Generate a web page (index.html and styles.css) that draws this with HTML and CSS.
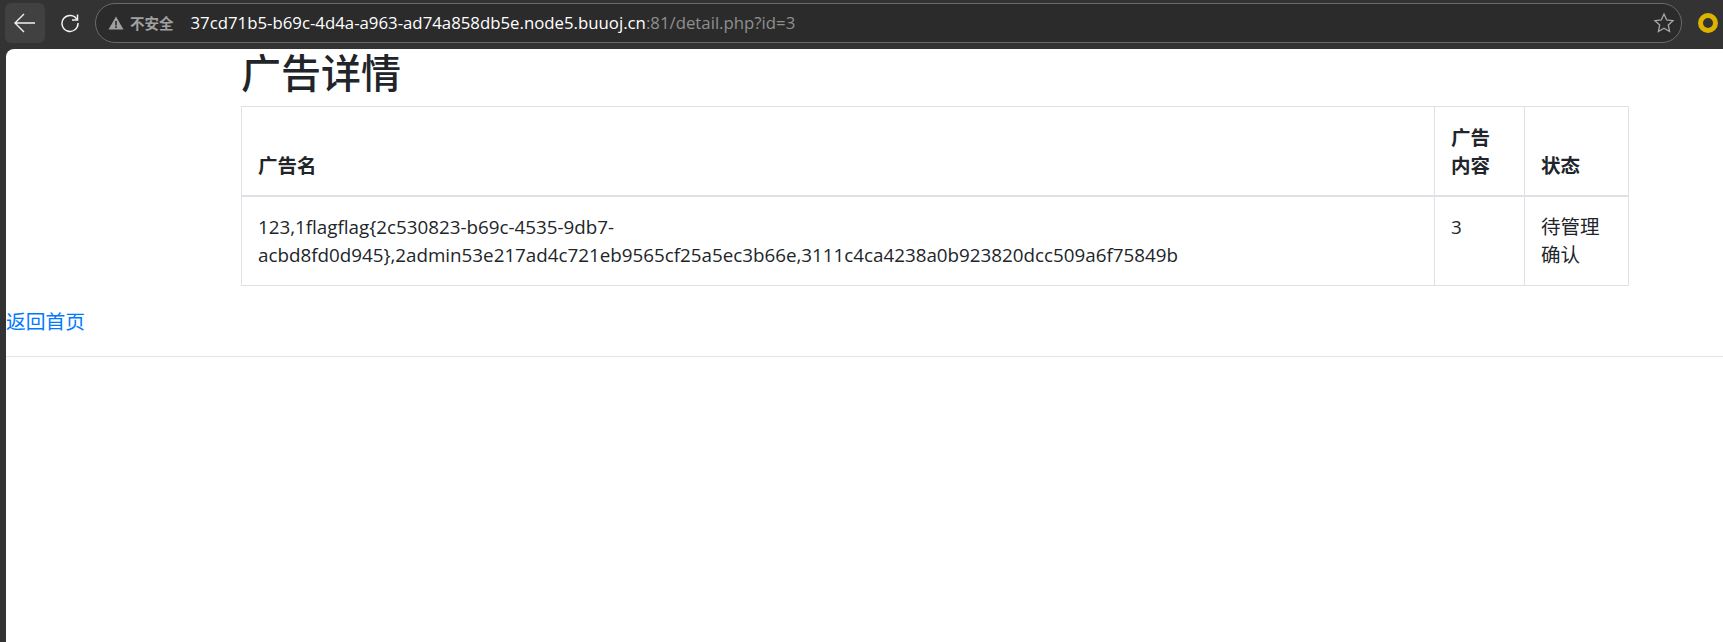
FILE: index.html
```html
<!DOCTYPE html>
<html lang="zh-CN">
<head>
    <meta charset="UTF-8">
    <title>广告详情</title>
    <link rel="stylesheet" href="styles.css">
</head>
<body>
    <div class="toolbar">
        <button class="back-btn">
            <svg width="24" height="24" viewBox="0 0 24 24" fill="none" stroke="#f2f2f2" stroke-width="1.4">
                <path d="M22 12H2M11 3l-9 9 9 9"/>
            </svg>
        </button>
        <button class="reload-btn">
            <svg width="20" height="20" viewBox="0 0 20 20" fill="none" stroke="#f2f2f2" stroke-width="1.5">
                <path d="M17 6.5A8 8 0 1 0 18 10"/>
                <path d="M17.5 1.5v5.5h-5.500"/>
            </svg>
        </button>
        <div class="omnibox">
            <svg class="warn-icon" width="16" height="16" viewBox="0 0 16 16">
                <path d="M8 1.500 15.500 14.500H.5z" fill="#a0a0a0"/>
                <path d="M7.200 6h1.600v4.500H7.200zM7.200 11.300h1.600v1.600H7.200z" fill="#2c2c2c"/>
            </svg>
            <span class="not-secure">不安全</span>
            <span class="url"><span class="host">37cd71b5-b69c-4d4a-a963-ad74a858db5e.node5.buuoj.cn</span>:81/detail.php?id=3</span>
            <svg class="star-icon" width="22" height="22" viewBox="0 0 22 22" fill="none" stroke="#a8a8a8" stroke-width="1.300">
                <path d="M11 2l2.700 6 6.300.7-4.700 4.300 1.300 6.500L11 16.200 5.400 19.500 6.700 13 2 8.700 8.300 8z"/>
            </svg>
        </div>
        <div class="ext-ring"></div>
    </div>

    <div class="page">
        <div class="container">
            <h1>广告详情</h1>
            <table class="ad-table">
                <thead>
                    <tr>
                        <th class="col-name">广告名</th>
                        <th class="col-content">广告内容</th>
                        <th class="col-status">状态</th>
                    </tr>
                </thead>
                <tbody>
                    <tr>
                        <td>123,1flagflag{2c530823-b69c-4535-9db7-acbd8fd0d945},2admin53e217ad4c721eb9565cf25a5ec3b66e,3111c4ca4238a0b923820dcc509a6f75849b</td>
                        <td>3</td>
                        <td class="cjk-cell">待管理确认</td>
                    </tr>
                </tbody>
            </table>
        </div>
        <a class="home-link" href="#">返回首页</a>
        <hr class="divider">
    </div>
</body>
</html>
```

FILE: styles.css
```css
html, body {
    height: 100%;
}

body {
    margin: 0;
    display: flex;
    flex-direction: column;
    overflow: hidden;
    background-color: #333333;
    font-family: "Open Sans", "Noto Sans CJK SC", sans-serif;
    font-size: 18.8px;
    line-height: 28px;
    color: #212529;
}

.toolbar {
    display: flex;
    align-items: center;
    height: 49px;
    flex-shrink: 0;
    padding: 0 4px 3px 5px;
    box-sizing: border-box;
}

.toolbar button {
    display: flex;
    align-items: center;
    justify-content: center;
    padding: 0;
    border: none;
    background: none;
}

.back-btn {
    width: 40px;
    height: 40px;
    border-radius: 6px;
    background-color: #414141 !important;
}

.reload-btn {
    width: 40px;
    height: 40px;
    margin-left: 5px;
}

.omnibox {
    display: flex;
    align-items: center;
    flex: 1;
    height: 40px;
    margin-left: 5px;
    padding: 0 6px 0 12px;
    box-sizing: border-box;
    border: 1px solid #6a6a6a;
    border-radius: 20px;
    background-color: #2b2b2b;
}

.not-secure {
    margin-left: 6px;
    font-family: "Noto Sans CJK SC", sans-serif;
    font-size: 14.500px;
    font-weight: 700;
    color: #a0a0a0;
}

.url {
    margin-left: 17px;
    flex: 1;
    font-size: 16.800px;
    color: #8f8f8f;
}

.host {
    color: #ffffff;
}

.ext-ring {
    width: 10px;
    height: 10px;
    margin-left: 16px;
    margin-right: 1px;
    border: 5px solid #dcb400;
    border-radius: 50%;
}

.page {
    flex: 1;
    margin-left: 6px;
    background-color: #fff;
    border-top-left-radius: 8px;
}

.container {
    margin-left: 235px;
    width: 1388px;
}

h1 {
    margin: 0;
    height: 57px;
    font-family: "Noto Sans CJK SC", sans-serif;
    font-size: 40px;
    font-weight: 500;
    line-height: 44px;
}

.ad-table {
    width: 100%;
    border-collapse: collapse;
    table-layout: fixed;
}

.ad-table th,
.ad-table td {
    padding: 16px;
    border: 1px solid #dee2e6;
    text-align: left;
    vertical-align: top;
}

.ad-table th {
    padding-top: 17px;
    padding-bottom: 15px;
    vertical-align: bottom;
    border-bottom-width: 2px;
    font-size: 19.500px;
    font-weight: 700;
}

.ad-table .cjk-cell {
    font-size: 19.500px;
}

.col-content {
    width: 57px;
}

.col-status {
    width: 71px;
}

.home-link {
    display: block;
    margin-top: 21px;
    font-family: "Noto Sans CJK SC", sans-serif;
    font-size: 19.800px;
    color: #007bff;
    text-decoration: none;
}

.divider {
    margin: 21px 0 0;
    border: none;
    border-top: 1px solid #e2e4e8;
}
```
